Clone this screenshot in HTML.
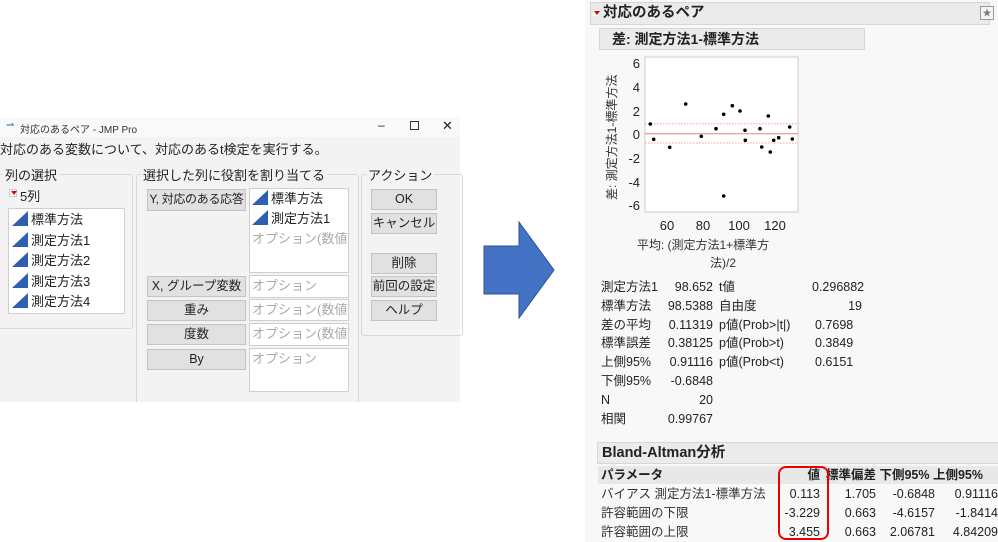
<!DOCTYPE html>
<html><head><meta charset="utf-8"><style>
*{margin:0;padding:0;box-sizing:border-box}
body{width:998px;height:542px;background:#fff;position:relative;overflow:hidden;font-family:"Liberation Sans","Noto Sans CJK JP",sans-serif;font-size:12.5px;color:#222}
.a{position:absolute;white-space:nowrap}
.grp{position:absolute;border:1px solid #d8d8d8;border-radius:3px}
.lbl{position:absolute;background:#f3f3f3;padding:0 2px;top:-10px;font-size:13px;white-space:nowrap}
.btn{position:absolute;background:#e1e1e1;border:1px solid #c4c4c4;text-align:center;font-size:12.5px;line-height:19px;white-space:nowrap;overflow:hidden}
.box{position:absolute;background:#fff;border:1px solid #cfcfcf;color:#aaa;font-size:13px;overflow:hidden;padding-left:2px;line-height:20px;white-space:nowrap}
.tri{display:inline-block;width:0;height:0;border-left:16px solid transparent;border-bottom:15px solid #2f5fb0;vertical-align:-2px;margin-right:3px}
.dk{color:#222}
.hdr{position:absolute;background:#ebebeb;border:1px solid #d6d6d6;font-weight:bold;font-size:14px;padding-left:12px;line-height:20px;white-space:nowrap}
.r{text-align:right}
</style></head><body>
<!-- dialog -->
<div class="a" style="left:0;top:117px;width:460px;height:285px;background:#f3f3f3;overflow:hidden">
<div class="grp" style="left:136px;top:57px;width:223px;height:240px"><span class="lbl" style="left:4px">選択した列に役割を割り当てる</span></div>
</div>
<div class="a" style="left:0;top:117px;width:460px;height:20px;background:#f9f9f9"></div>
<div class="a" style="left:6px;top:120px;font-size:10px;color:#3060b0">&#x21C0;</div>
<div class="a" style="left:20px;top:121px;font-size:10px;color:#333">対応のあるペア - JMP Pro</div>
<div class="a" style="left:378px;top:118px;font-size:12px">–</div>
<div class="a" style="left:410px;top:121px;width:9px;height:9px;border:1px solid #333"></div>
<div class="a" style="left:442px;top:118px;font-size:13px">✕</div>
<div class="a" style="left:0;top:139px;font-size:13px">対応のある変数について、対応のあるt検定を実行する。</div>
<div class="grp" style="left:-2px;top:174px;width:135px;height:155px"><span class="lbl" style="left:4px">列の選択</span></div>
<div class="a" style="left:9px;top:189px;width:8px;height:8px;background:#fff;border:1px solid #ccc"></div>
<div class="a" style="left:11px;top:191px;width:0;height:0;border-left:3px solid transparent;border-right:3px solid transparent;border-top:4px solid #d00"></div>
<div class="a" style="left:20px;top:186px;font-size:13px">5列</div>
<div class="box" style="left:8px;top:208px;width:117px;height:106px;color:#222;line-height:20.5px;padding-top:1px;padding-left:3px">
<div><span class="tri"></span>標準方法</div><div><span class="tri"></span>測定方法1</div><div><span class="tri"></span>測定方法2</div><div><span class="tri"></span>測定方法3</div><div><span class="tri"></span>測定方法4</div></div>
<div class="btn" style="left:147px;top:189px;width:99px;height:22px;font-size:12px;letter-spacing:-0.3px">Y, 対応のある応答</div>
<div class="btn" style="left:147px;top:276px;width:99px;height:21px">X, グループ変数</div>
<div class="btn" style="left:147px;top:300px;width:99px;height:21px">重み</div>
<div class="btn" style="left:147px;top:324px;width:99px;height:21px">度数</div>
<div class="btn" style="left:147px;top:349px;width:99px;height:21px">By</div>
<div class="box" style="left:249px;top:188px;width:100px;height:85px"><div class="dk"><span class="tri"></span>標準方法</div><div class="dk"><span class="tri"></span>測定方法1</div><div>オプション(数値</div></div>
<div class="box" style="left:249px;top:275px;width:100px;height:23px">オプション</div>
<div class="box" style="left:249px;top:299px;width:100px;height:22px">オプション(数値</div>
<div class="box" style="left:249px;top:323px;width:100px;height:23px">オプション(数値</div>
<div class="box" style="left:249px;top:348px;width:100px;height:44px">オプション</div>
<div class="grp" style="left:361px;top:174px;width:102px;height:162px"><span class="lbl" style="left:4px">アクション</span></div>
<div class="btn" style="left:371px;top:189px;width:66px;height:21px">OK</div>
<div class="btn" style="left:371px;top:213px;width:66px;height:21px">キャンセル</div>
<div class="btn" style="left:371px;top:253px;width:66px;height:21px">削除</div>
<div class="btn" style="left:371px;top:276px;width:66px;height:21px">前回の設定</div>
<div class="btn" style="left:371px;top:300px;width:66px;height:21px">ヘルプ</div>
<!-- arrow -->
<svg class="a" style="left:0;top:0" width="998" height="542"><polygon points="484,246 519,246 519,222 554,270 519,318 519,294 484,294" fill="#4472c4" stroke="#2f528f" stroke-width="1"/></svg>
<!-- right panel -->
<div class="a" style="left:585px;top:0;width:413px;height:542px;background:#f8f8f8"></div>
<div class="hdr" style="left:590px;top:2px;width:400px;height:23px;font-size:14.5px">対応のあるペア</div>
<div class="a" style="left:593px;top:10px;width:6px;height:6px;background:#fff"></div>
<div class="a" style="left:594px;top:11px;border-left:3px solid transparent;border-right:3px solid transparent;border-top:4px solid #d00"></div>
<div class="a" style="left:980px;top:6px;width:14px;height:14px;border:1px solid #999;background:#f4f4f4;font-size:9px;text-align:center;line-height:12px;color:#777">★</div>
<div class="hdr" style="left:599px;top:28px;width:266px;height:22px">差: 測定方法1-標準方法</div>
<svg class="a" style="left:585px;top:0" width="413" height="270">
<rect x="60" y="57" width="153" height="155" fill="#fff" stroke="#ccc"/>
<g font-size="13" fill="#222" text-anchor="end" font-family="Liberation Sans">
<text x="55" y="68">6</text><text x="55" y="92">4</text><text x="55" y="116">2</text><text x="55" y="139">0</text><text x="55" y="163">-2</text><text x="55" y="187">-4</text><text x="55" y="210">-6</text></g>
<g font-size="13" fill="#222" text-anchor="middle" font-family="Liberation Sans"><text x="82" y="230">60</text><text x="118" y="230">80</text><text x="154" y="230">100</text><text x="190" y="230">120</text></g>
<text x="118" y="249" font-size="12" text-anchor="middle" fill="#333">平均: (測定方法1+標準方</text>
<text x="138" y="267" font-size="12" text-anchor="middle" fill="#333">法)/2</text>
<text transform="translate(31,200) rotate(-90)" font-size="12" fill="#333">差: 測定方法1-標準方法</text>
<line x1="60" y1="133.7" x2="213" y2="133.7" stroke="#f08080"/>
<line x1="60" y1="123.7" x2="213" y2="123.7" stroke="#f4a0a0" stroke-dasharray="1.5,1.5"/>
<line x1="60" y1="143" x2="213" y2="143" stroke="#f4a0a0" stroke-dasharray="1.5,1.5"/>
<g fill="#000">
<circle cx="65.3" cy="124" r="1.8"/><circle cx="68.7" cy="139.3" r="1.8"/><circle cx="84.7" cy="147.3" r="1.8"/><circle cx="100.7" cy="104" r="1.8"/><circle cx="116.3" cy="136.3" r="1.8"/><circle cx="131" cy="128.7" r="1.8"/><circle cx="138.7" cy="114.3" r="1.8"/><circle cx="138.7" cy="196" r="1.8"/><circle cx="147.3" cy="105.7" r="1.8"/><circle cx="155" cy="111" r="1.8"/><circle cx="160" cy="130.3" r="1.8"/><circle cx="160.3" cy="140.3" r="1.8"/><circle cx="175" cy="128.7" r="1.8"/><circle cx="176.7" cy="147" r="1.8"/><circle cx="183.3" cy="116" r="1.8"/><circle cx="185.3" cy="152" r="1.8"/><circle cx="188.7" cy="140.3" r="1.8"/><circle cx="193.7" cy="137.7" r="1.8"/><circle cx="204.7" cy="127" r="1.8"/><circle cx="207.3" cy="139" r="1.8"/></g>
</svg>
<div class="a" style="left:601px;top:278px;line-height:18.8px;font-size:12.5px">測定方法1<br>標準方法<br>差の平均<br>標準誤差<br>上側95%<br>下側95%<br>N<br>相関</div>
<div class="a r" style="left:650px;top:278px;width:63px;line-height:18.8px;font-size:12.5px">98.652<br>98.5388<br>0.11319<br>0.38125<br>0.91116<br>-0.6848<br>20<br>0.99767</div>
<div class="a" style="left:719px;top:278px;line-height:18.8px;font-size:12.5px">t値<br>自由度<br>p値(Prob&gt;|t|)<br>p値(Prob&gt;t)<br>p値(Prob&lt;t)</div>
<div class="a" style="left:812px;top:278px;width:50px;line-height:18.8px;font-size:12.5px;text-align:right">0.296882<br>19</div>
<div class="a" style="left:815px;top:315.6px;line-height:18.8px;font-size:12.5px">0.7698<br>0.3849<br>0.6151</div>
<div class="hdr" style="left:597px;top:442px;width:405px;height:22px;font-size:14.5px;padding-left:4px">Bland-Altman分析</div>
<div class="a" style="left:598px;top:466px;width:400px;height:18px;background:#e8e8e8"></div>
<div class="a" style="left:601px;top:466px;font-weight:bold;line-height:18px">パラメータ</div>
<div class="a r" style="left:770px;top:466px;width:50px;font-weight:bold;line-height:18px">値</div>
<div class="a" style="left:826px;top:466px;font-weight:bold;line-height:18px">標準偏差 下側95% 上側95%</div>
<div class="a" style="left:601px;top:485px;line-height:19px;color:#333">バイアス 測定方法1-標準方法<br>許容範囲の下限<br>許容範囲の上限</div>
<div class="a r" style="left:770px;top:485px;width:50px;line-height:19px">0.113<br>-3.229<br>3.455</div>
<div class="a r" style="left:826px;top:485px;width:50px;line-height:19px">1.705<br>0.663<br>0.663</div>
<div class="a r" style="left:880px;top:485px;width:55px;line-height:19px">-0.6848<br>-4.6157<br>2.06781</div>
<div class="a r" style="left:940px;top:485px;width:58px;line-height:19px">0.91116<br>-1.8414<br>4.84209</div>
<div class="a" style="left:778px;top:466px;width:51px;height:74px;border:2px solid #e00;border-radius:8px"></div>
</body></html>
